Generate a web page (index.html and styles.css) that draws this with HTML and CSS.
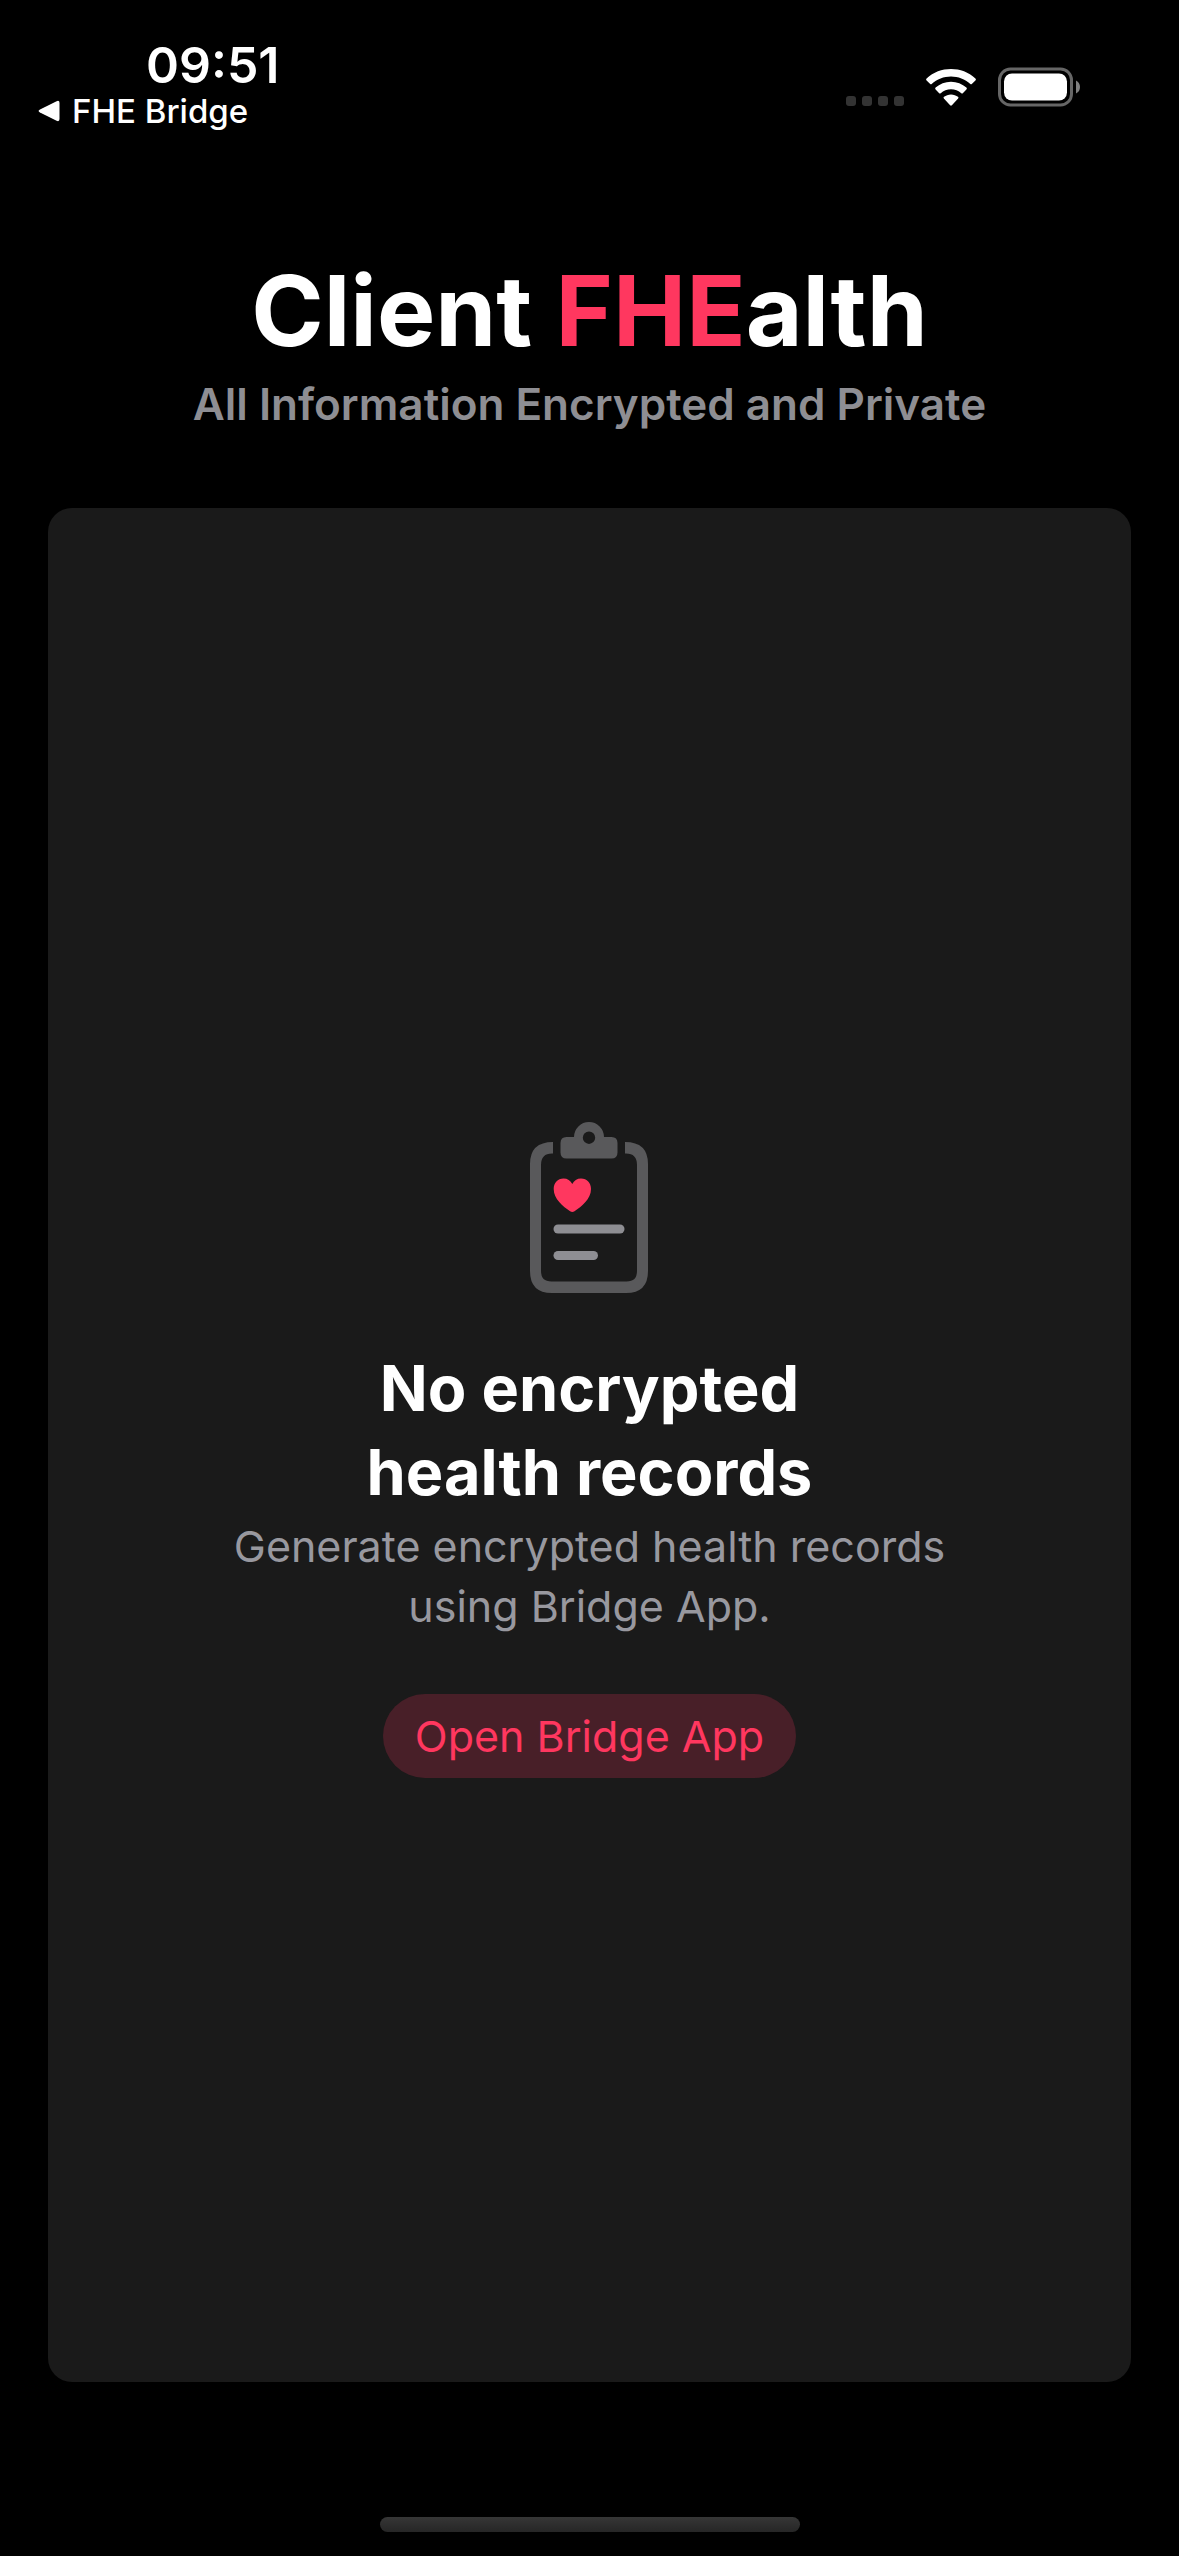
FILE: index.html
```html
<!DOCTYPE html>
<html lang="en">
<head>
  <meta charset="utf-8">
  <meta name="viewport" content="width=device-width, initial-scale=1">
  <title>Client FHEalth</title>
  <link rel="stylesheet" href="styles.css">
</head>
<body class="screen">
  <header class="status-bar">
    <div class="status-left">
      <time class="clock">09:51</time>
      <a class="back-link" href="#">
        <svg class="back-icon" width="22" height="22" viewBox="0 0 22 22" aria-hidden="true">
          <path d="M2 9.4 18.6 1.2Q21.5 0 21.5 3v16q0 3-2.9 1.8L2 12.6Q-.8 11 2 9.4Z" fill="#fff"/>
        </svg>
        FHE Bridge
      </a>
    </div>
    <div class="status-right">
      <svg width="58" height="40" viewBox="0 0 58 40" role="img" aria-label="No signal" fill="#333">
        <rect y="29" width="10" height="10" rx="3"/>
        <rect x="16" y="29" width="10" height="10" rx="3"/>
        <rect x="32" y="29" width="10" height="10" rx="3"/>
        <rect x="48" y="29" width="10" height="10" rx="3"/>
      </svg>
      <svg class="wifi" width="50" height="40" viewBox="0 0 50 40" role="img" aria-label="Wi-Fi" fill="#fff">
        <path d="M.6 13.400Q-.4 12.400.6 11.400C7.400 5.200 16 2 25 2s17.600 3.200 24.400 9.400q1 1 0 2l-3.600 3.600q-.7.700-1.500 0C39 12.200 32.200 9.500 25 9.500S11 12.200 5.700 17q-.8.700-1.500 0Z"/>
        <path d="M9.600 22.600q-1-1 0-2C13.700 16.900 19.200 14.700 25 14.700s11.300 2.200 15.400 5.900q1 1 0 2l-3.600 3.600q-.7.700-1.500 0C32.500 23.700 28.900 22.300 25 22.300s-7.500 1.400-10.300 3.900q-.8.700-1.500 0Z"/>
        <path d="M17.900 31.600q-.9-1 .1-1.800c1.900-1.500 4.300-2.400 7-2.400s5.100.900 7 2.400q1 .8.100 1.800l-6.200 6.600q-.9.900-1.800 0Z"/>
      </svg>
      <svg width="83" height="40" viewBox="0 0 83 40" role="img" aria-label="Battery full">
        <rect x="1.500" y="2" width="72" height="36" rx="11" fill="none" stroke="#666" stroke-width="3"/>
        <rect x="6" y="6.500" width="63" height="27" rx="8" fill="#fff"/>
        <path d="M78 13.500q4 2 4 6.500t-4 6.500Z" fill="#808080"/>
      </svg>
    </div>
  </header>

  <div class="titles">
    <h1 class="title">Client <span class="accent">FHE</span>alth</h1>
    <p class="subtitle">All Information Encrypted and Private</p>
  </div>

  <main class="card">
    <svg class="clipboard" width="119" height="172" viewBox="0 0 119 172" aria-hidden="true">
      <path d="M23 20v11.500h-1Q11 31.500 11 43v106q0 10.500 10.500 10.500h75Q107 159.500 107 149V43q0-11.500-11-11.500h-1V20q23 0 23 22v107q0 22-22 22H22Q0 171 0 149V42Q0 20 23 20Z" fill="#59595b"/>
      <path fill-rule="evenodd" d="M44 15a15 15 0 0 1 30 0h7.500q6 0 6 6v9.500q0 6-6 6h-45q-6 0-6-6V21q0-6 6-6Zm15-5.500a6.200 6.200 0 1 0 0 12.400a6.200 6.200 0 1 0 0-12.400Z" fill="#59595b"/>
      <path d="M42.300 62C44 58.500 47 56.500 51 56.500c6 0 10 4.500 10 10.500 0 10-9.500 17.500-16.500 22.300q-2.200 1.500-4.400 0C33 84.500 23.700 77 23.700 67c0-6 4-10.500 9.800-10.500 4 0 7 2 8.800 5.500Z" fill="#ff375f"/>
      <rect x="23.500" y="102.500" width="71" height="9" rx="4.500" fill="#8e8e93"/>
      <rect x="23.500" y="129" width="44.500" height="9" rx="4.500" fill="#8e8e93"/>
    </svg>
    <h2 class="empty-title">No encrypted<br>health records</h2>
    <p class="empty-text">Generate encrypted health records<br>using Bridge App.</p>
    <button class="open-button" type="button">Open Bridge App</button>
  </main>

  <footer class="home-area">
    <div class="home-indicator"></div>
  </footer>
</body>
</html>
```
FILE: styles.css
```css
* {
  box-sizing: border-box;
}

.screen {
  display: flex;
  flex-direction: column;
  min-height: 100vh;
  margin: 0;
  background: #000;
  color: #fff;
  font-family: Inter, "Liberation Sans", sans-serif;
}

.status-bar {
  display: flex;
  justify-content: space-between;
  align-items: flex-start;
  padding: 40px 98px 0 38px;
}

.status-left {
  display: flex;
  flex-direction: column;
}

.clock {
  padding-left: 108px;
  font-size: 50px;
  font-weight: 600;
  line-height: 50px;
}

.back-link {
  display: flex;
  align-items: center;
  gap: 12px;
  color: #fff;
  font-size: 33px;
  font-weight: 500;
  line-height: 42px;
  text-decoration: none;
}

.status-right {
  display: flex;
  gap: 22px;
  padding-top: 27px;
}

.titles {
  padding: 118px 48px 0;
  text-align: center;
}

.title {
  margin: 0;
  font-size: 98px;
  font-weight: 700;
  line-height: 122px;
}

.accent {
  color: #ff375f;
}

.subtitle {
  margin: 2px 0 0;
  color: #8e8e93;
  font-size: 44px;
  font-weight: 600;
  line-height: 60px;
}

.card {
  display: flex;
  flex: 1;
  flex-direction: column;
  align-items: center;
  justify-content: center;
  margin: 74px 48px 0;
  padding-top: 10px;
  border-radius: 24px;
  background: #1a1a1a;
  text-align: center;
}

.empty-title {
  margin: 52px 0 0;
  font-size: 63px;
  font-weight: 700;
  line-height: 84px;
}

.empty-text {
  margin: 2px 0 0;
  color: #98989f;
  font-size: 43px;
  line-height: 60px;
}

.open-button {
  height: 84px;
  margin-top: 58px;
  padding: 0 32px;
  border: 0;
  border-radius: 42px;
  background: #481f28;
  color: #ff375f;
  font: inherit;
  font-size: 43px;
}

.home-area {
  display: flex;
  justify-content: center;
  padding: 135px 0 24px;
}

.home-indicator {
  width: 420px;
  height: 15px;
  border-radius: 8px;
  background: linear-gradient(#363636, #262626);
}
```
